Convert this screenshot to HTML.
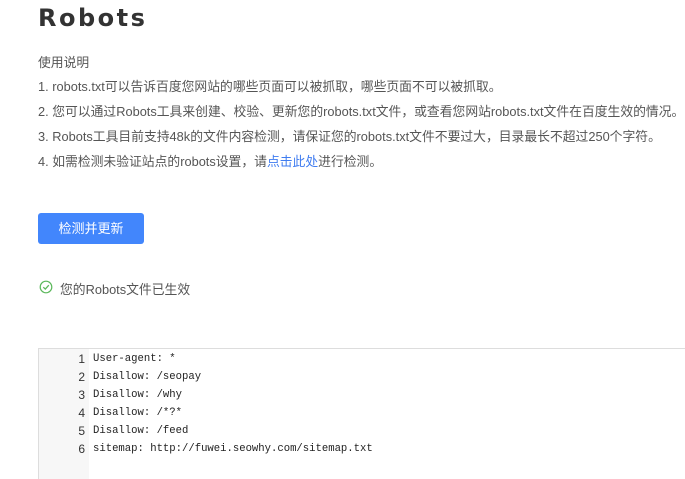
<!DOCTYPE html>
<html><head><meta charset="utf-8"><style>
body{margin:0;width:685px;height:467px;overflow:hidden;background:#fff;font-family:"Liberation Sans","Noto Sans CJK SC",sans-serif;color:#555;font-size:12.8px}
h1{position:absolute;left:38px;top:4px;margin:0;font-size:24px;font-weight:bold;letter-spacing:2.5px;color:#333;font-family:"DejaVu Sans",sans-serif}
.t{position:absolute;left:38px;white-space:nowrap}
a{color:#3f7cf0;text-decoration:none}
.btn{position:absolute;left:38px;top:213px;width:106px;height:31px;background:#4286fc;border-radius:3px;color:#fff;text-align:center;line-height:31px;font-size:13px}
.ed{position:absolute;left:38px;top:348px;width:660px;height:130px;border-top:1px solid #ddd;border-left:1px solid #ddd;font-family:"Liberation Mono","DejaVu Sans Mono",monospace;font-size:10.6px;color:#222}
.g{position:absolute;left:0;top:0;width:50px;height:100%;background:#f7f7f7}
.l{position:absolute;left:0;height:18px;line-height:18px;white-space:pre}
.n{position:absolute;left:30px;width:16px;text-align:right;color:#333;font-family:"Liberation Sans",sans-serif;font-size:12px}
.c{position:absolute;left:54px}
</style></head><body>
<h1>Robots</h1>
<div class="t" style="top:52px">使用说明</div>
<div class="t" style="top:76px">1. robots.txt可以告诉百度您网站的哪些页面可以被抓取，哪些页面不可以被抓取。</div>
<div class="t" style="top:101px">2. 您可以通过Robots工具来创建、校验、更新您的robots.txt文件，或查看您网站robots.txt文件在百度生效的情况。</div>
<div class="t" style="top:126px">3. Robots工具目前支持48k的文件内容检测，请保证您的robots.txt文件不要过大，目录最长不超过250个字符。</div>
<div class="t" style="top:151px">4. 如需检测未验证站点的robots设置，请<a>点击此处</a>进行检测。</div>
<div class="btn">检测并更新</div>
<svg style="position:absolute;left:39px;top:280px" width="14" height="14" viewBox="0 0 14 14"><circle cx="7" cy="7" r="5.8" fill="none" stroke="#5cb85c" stroke-width="1.2"/><path d="M4.3 7.2 6.3 9.1 9.8 5.2" fill="none" stroke="#5cb85c" stroke-width="1.3"/></svg>
<div class="t" style="top:279px;left:60px">您的Robots文件已生效</div>
<div class="ed"><div class="g"></div>
<div class="l" style="top:1px"><span class="n">1</span><span class="c">User-agent: *</span></div>
<div class="l" style="top:19px"><span class="n">2</span><span class="c">Disallow: /seopay</span></div>
<div class="l" style="top:37px"><span class="n">3</span><span class="c">Disallow: /why</span></div>
<div class="l" style="top:55px"><span class="n">4</span><span class="c">Disallow: /*?*</span></div>
<div class="l" style="top:73px"><span class="n">5</span><span class="c">Disallow: /feed</span></div>
<div class="l" style="top:91px"><span class="n">6</span><span class="c">sitemap: http://fuwei.seowhy.com/sitemap.txt</span></div>
</div>
</body></html>
